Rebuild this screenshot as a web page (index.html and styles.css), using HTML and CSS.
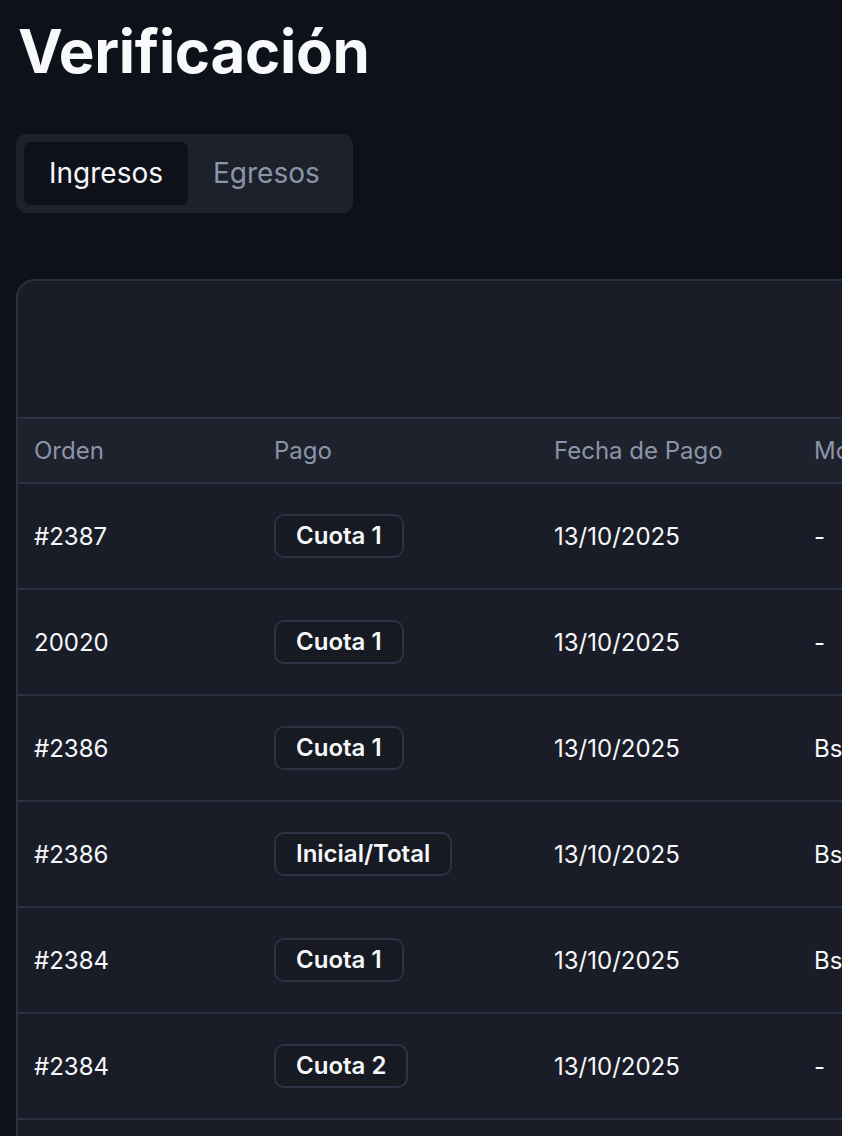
FILE: index.html
```html
<!DOCTYPE html>
<html lang="es">
<head>
<meta charset="utf-8">
<title>Verificación</title>
<link rel="stylesheet" href="styles.css">
</head>
<body>
<main class="page">
  <h1 class="title">Verificación</h1>
  <div class="tabs">
    <button class="tab tab-active">Ingresos</button>
    <button class="tab">Egresos</button>
  </div>
  <section class="card">
    <div class="card-toolbar"></div>
    <table class="table">
      <thead>
        <tr>
          <th class="c1">Orden</th>
          <th class="c2">Pago</th>
          <th class="c3">Fecha de Pago</th>
          <th class="c4">Monto</th>
        </tr>
      </thead>
      <tbody>
        <tr><td>#2387</td><td><span class="badge">Cuota 1</span></td><td>13/10/2025</td><td>-</td></tr>
        <tr><td>20020</td><td><span class="badge">Cuota 1</span></td><td>13/10/2025</td><td>-</td></tr>
        <tr><td>#2386</td><td><span class="badge">Cuota 1</span></td><td>13/10/2025</td><td>Bs 350.00</td></tr>
        <tr><td>#2386</td><td><span class="badge">Inicial/Total</span></td><td>13/10/2025</td><td>Bs 700.00</td></tr>
        <tr><td>#2384</td><td><span class="badge">Cuota 1</span></td><td>13/10/2025</td><td>Bs 350.00</td></tr>
        <tr><td>#2384</td><td><span class="badge">Cuota 2</span></td><td>13/10/2025</td><td>-</td></tr>
        <tr><td>#2383</td><td><span class="badge">Cuota 1</span></td><td>13/10/2025</td><td>-</td></tr>
      </tbody>
    </table>
  </section>
</main>
</body>
</html>
```

FILE: styles.css
```css
html, body {
  margin: 0;
  padding: 0;
  overflow: hidden;
  background: #0e1119;
}

body {
  font-family: Inter, "Noto Sans", sans-serif;
  color: #f6f7f9;
}

.page {
  padding: 15px 0 0 16px;
  width: 1500px;
}

.title {
  margin: 0 0 0 2px;
  font-size: 60px;
  line-height: 72px;
  font-weight: 700;
  letter-spacing: -0.3px;
  color: #f8f9fb;
}

.tabs {
  display: inline-flex;
  margin-top: 47px;
  padding: 8px;
  background: #1d212c;
  border-radius: 10px;
}

.tab {
  font-family: inherit;
  font-size: 28px;
  line-height: 39px;
  padding: 12px 25px;
  border: 0;
  border-radius: 7px;
  background: transparent;
  color: #8b94a8;
  font-weight: 400;
}

.tab-active {
  background: #0e1119;
  color: #f6f7f9;
}

.card {
  margin-top: 66px;
  width: 1400px;
  background: #1a1d27;
  border: 2px solid #2a3141;
  border-radius: 19px;
  overflow: hidden;
}

.card-toolbar {
  height: 136px;
}

.table {
  width: 100%;
  border-collapse: collapse;
  table-layout: fixed;
  font-size: 24px;
}

.table th {
  text-align: left;
  font-weight: 400;
  color: #8b94a8;
  background: #1e222d;
  height: 63px;
  padding: 0 16px;
  border-top: 2px solid #2a3141;
  border-bottom: 2px solid #2a3141;
}

.c1 { width: 208px; }
.c2 { width: 248px; }
.c3 { width: 228px; }

.table td {
  height: 104px;
  padding: 0 16px;
  border-bottom: 2px solid #2a3141;
  white-space: nowrap;
}

.badge {
  display: inline-block;
  font-size: 24px;
  font-weight: 600;
  line-height: 40px;
  padding: 0 20px;
  border: 2px solid #2c3345;
  border-radius: 10px;
  background: #171a23;
}
```
